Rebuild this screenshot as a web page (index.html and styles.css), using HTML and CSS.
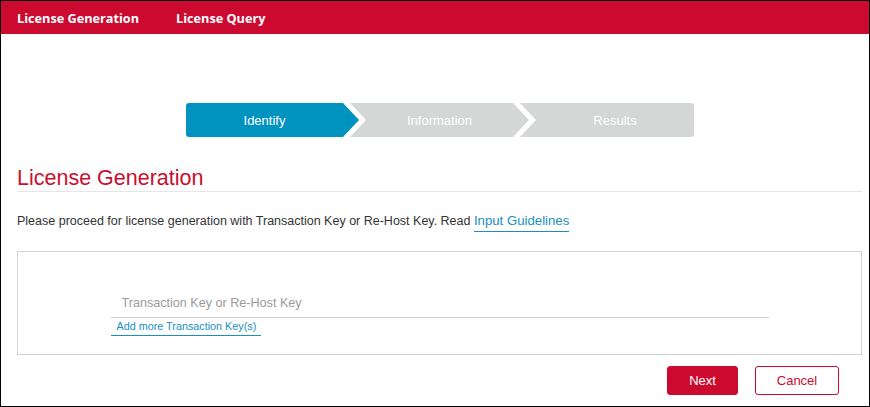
FILE: index.html
```html
<!DOCTYPE html>
<html lang="en">
<head>
<meta charset="utf-8">
<title>License Generation</title>
<link rel="stylesheet" href="styles.css">
</head>
<body>
<div class="frame">
  <header class="topnav">
    <a class="navlink" href="#">License Generation</a>
    <a class="navlink" href="#">License Query</a>
  </header>
  <main class="content">
    <div class="stepper">
      <div class="step step-first active">Identify</div>
      <div class="step step-mid">Information</div>
      <div class="step step-last">Results</div>
    </div>
    <h1 class="title">License Generation</h1>
    <p class="intro">Please proceed for license generation with Transaction Key or Re-Host Key. Read <a class="guide" href="#">Input Guidelines</a></p>
    <section class="keybox">
      <div class="field">
        <input class="keyinput" type="text" placeholder="Transaction Key or Re-Host Key">
        <a class="addmore" href="#">Add more Transaction Key(s)</a>
      </div>
    </section>
    <div class="actions">
      <button class="btn btn-primary">Next</button>
      <button class="btn btn-outline">Cancel</button>
    </div>
  </main>
</div>
</body>
</html>
```
FILE: styles.css
```css
html, body {
  margin: 0;
  padding: 0;
}
body {
  font-family: "Liberation Sans", Arial, sans-serif;
  background: #fff;
}
.frame {
  width: 870px;
  height: 407px;
  box-sizing: border-box;
  border: 1px solid #000;
  overflow: hidden;
}
.topnav {
  height: 33px;
  background: #cc0a2f;
  display: flex;
  align-items: center;
  gap: 37px;
  padding-left: 16px;
}
.navlink {
  font-family: "Open Sans", sans-serif;
  font-weight: 700;
  font-size: 12.7px;
  color: #fff;
  text-decoration: none;
  line-height: 18px;
}
.content {
  padding: 0 7px 0 16px;
}
.stepper {
  display: flex;
  width: 508px;
  height: 34px;
  margin: 69px 0 0 169px;
}
.step {
  height: 34px;
  display: flex;
  align-items: center;
  justify-content: center;
  font-size: 13px;
  color: #fff;
  background: #d5d6d6;
  box-sizing: border-box;
}
.step.active {
  background: #0093bf;
}
.step-first {
  width: 173px;
  padding-right: 16px;
  border-radius: 3px 0 0 3px;
  clip-path: polygon(0 0, calc(100% - 16px) 0, 100% 50%, calc(100% - 16px) 100%, 0 100%);
}
.step-mid {
  width: 179px;
  margin-left: -9px;
  clip-path: polygon(0 0, calc(100% - 16px) 0, 100% 50%, calc(100% - 16px) 100%, 0 100%, 16px 50%);
}
.step-last {
  width: 174px;
  margin-left: -9px;
  padding-left: 16px;
  border-radius: 0 3px 3px 0;
  clip-path: polygon(0 0, 100% 0, 100% 100%, 0 100%, 16px 50%);
}
.title {
  margin: 28px 0 0;
  font-weight: 400;
  font-size: 21.5px;
  line-height: 26px;
  color: #c8102e;
  border-bottom: 1px solid #e6e6e6;
}
.intro {
  margin: 20px 0 0;
  font-size: 12.5px;
  line-height: 18px;
  color: #333;
}
.guide {
  font-size: 13.2px;
  color: #1a8fbf;
  text-decoration: none;
  border-bottom: 1px solid #1a8fbf;
  padding-bottom: 3px;
}
.keybox {
  margin-top: 21px;
  height: 104px;
  box-sizing: border-box;
  border: 1px solid #d3d3d3;
  display: flex;
  justify-content: center;
}
.field {
  width: 658px;
  margin-top: 40px;
  display: flex;
  flex-direction: column;
  align-items: flex-start;
}
.keyinput {
  width: 100%;
  height: 26px;
  box-sizing: border-box;
  border: none;
  border-bottom: 1px solid #cfcfcf;
  padding: 0 0 3px 11px;
  font-family: "Liberation Sans", Arial, sans-serif;
  font-size: 12.6px;
  outline: none;
  background: transparent;
}
.keyinput::placeholder {
  color: #9a9a9a;
}
.addmore {
  margin-top: 2px;
  padding: 0 5px 2px 6px;
  font-size: 10.8px;
  line-height: 13px;
  color: #1a8fbf;
  text-decoration: none;
  border-bottom: 1px solid #1a8fbf;
}
.actions {
  display: flex;
  justify-content: flex-end;
  gap: 17px;
  margin-top: 11px;
  padding-right: 23px;
}
.btn {
  height: 29px;
  border-radius: 3px;
  font-family: "Liberation Sans", Arial, sans-serif;
  font-size: 13px;
  box-sizing: border-box;
  cursor: pointer;
}
.btn-primary {
  width: 71px;
  background: #cc0a2f;
  border: 1px solid #cc0a2f;
  color: #fff;
}
.btn-outline {
  width: 84px;
  background: #fff;
  border: 1px solid #cc0a2f;
  color: #cc0a2f;
}
```
